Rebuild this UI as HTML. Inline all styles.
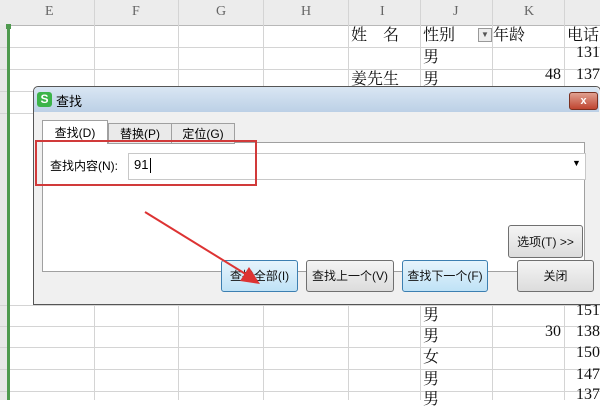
<!DOCTYPE html><html><head><meta charset="utf-8"><style>
body{margin:0;width:600px;height:400px;overflow:hidden;background:#fff;font-family:"Liberation Sans","Noto Sans CJK SC",sans-serif;position:relative}
.a{position:absolute}
.hdr{top:0;left:0;width:600px;height:25px;background:#ececec;border-bottom:1px solid #b8b8b8}
.vl{position:absolute;top:0;width:1px;height:400px;background:#d4d4d4}
.hl{position:absolute;left:0;width:600px;height:1px;background:#d4d4d4}
.ch{position:absolute;top:4px;font-family:"Liberation Serif",serif;font-size:14px;color:#666}
.c{position:absolute;font-family:"Liberation Serif","Noto Serif CJK SC",serif;font-size:16px;color:#111;margin-top:-3px}
.btn{position:absolute;box-sizing:border-box;border:1px solid #707070;border-radius:3px;background:linear-gradient(#f4f4f4,#dcdcdc);font-size:12px;text-align:center;line-height:30px;color:#111}
.blue{background:linear-gradient(#e6f4fc,#bfe2f6);border-color:#3c7fb1}
</style></head><body>
<div class="a hdr"></div>
<div class="a" style="left:0;top:25px;width:8px;height:375px;background:#e8e8e8"></div>
<div class="vl" style="left:94px"></div><div class="vl" style="left:178px"></div><div class="vl" style="left:263px"></div><div class="vl" style="left:348px"></div><div class="vl" style="left:420px"></div><div class="vl" style="left:492px"></div><div class="vl" style="left:564px"></div>
<div class="hl" style="top:47px"></div><div class="hl" style="top:69px"></div><div class="hl" style="top:91px"></div><div class="hl" style="top:113px"></div><div class="hl" style="top:305px"></div><div class="hl" style="top:326px"></div><div class="hl" style="top:347px"></div><div class="hl" style="top:369px"></div><div class="hl" style="top:391px"></div>
<div class="a" style="left:7px;top:25px;width:3px;height:375px;background:#4f9a4f"></div>
<div class="a" style="left:6px;top:24px;width:5px;height:5px;background:#4f9a4f"></div>
<span class="ch" style="left:45px">E</span><span class="ch" style="left:132px">F</span><span class="ch" style="left:216px">G</span><span class="ch" style="left:301px">H</span><span class="ch" style="left:380px">I</span><span class="ch" style="left:453px">J</span><span class="ch" style="left:524px">K</span>
<span class="c" style="left:351px;top:25px">姓　名</span><span class="c" style="left:423px;top:25px">性别</span>
<div class="a" style="left:478px;top:28px;width:12px;height:12px;border:1px solid #999;background:#eee;font-size:8px;text-align:center;line-height:12px;color:#555">▼</div>
<span class="c" style="left:493px;top:25px">年龄</span><span class="c" style="left:567px;top:25px">电话</span>
<span class="c" style="left:423px;top:47px">男</span><span class="c" style="left:576px;top:47px">131</span>
<span class="c" style="left:351px;top:69px">姜先生</span><span class="c" style="left:423px;top:69px">男</span><span class="c" style="left:545px;top:69px">48</span><span class="c" style="left:576px;top:69px">137</span>
<span class="c" style="left:423px;top:305px">男</span><span class="c" style="left:576px;top:305px">151</span>
<span class="c" style="left:423px;top:326px">男</span><span class="c" style="left:545px;top:326px">30</span><span class="c" style="left:576px;top:326px">138</span>
<span class="c" style="left:423px;top:347px">女</span><span class="c" style="left:576px;top:347px">150</span>
<span class="c" style="left:423px;top:369px">男</span><span class="c" style="left:576px;top:369px">147</span>
<span class="c" style="left:423px;top:389px">男</span><span class="c" style="left:576px;top:389px">137</span>
<div class="a" style="left:33px;top:86px;width:566px;height:217px;background:#f0f0f0;border:1px solid #555;border-radius:5px 5px 0 0"></div>
<div class="a" style="left:34px;top:87px;width:565px;height:25px;background:linear-gradient(#d9e6f3,#bcd0e6);border-radius:5px 5px 0 0"></div>
<div class="a" style="left:37px;top:92px;width:15px;height:15px;background:#3cb44a;border-radius:3px;color:#fff;font-size:12px;font-weight:bold;text-align:center;line-height:15px">S</div>
<span class="a" style="left:56px;top:91px;font-size:13px">查找</span>
<div class="a" style="left:569px;top:92px;width:27px;height:16px;background:linear-gradient(#e0a090,#c04530);border:1px solid #7a3020;border-radius:3px;color:#fff;font-size:11px;font-weight:bold;text-align:center;line-height:16px">x</div>
<div class="a" style="left:42px;top:142px;width:541px;height:128px;background:#fff;border:1px solid #a0a0a0"></div>
<div class="a" style="left:42px;top:120px;width:64px;height:23px;background:#fff;border:1px solid #a0a0a0;border-bottom:none;font-size:12px;text-align:center;line-height:24px">查找(D)</div>
<div class="a" style="left:108px;top:123px;width:62px;height:19px;background:#eaeaea;border:1px solid #a0a0a0;font-size:12px;text-align:center;line-height:20px">替换(P)</div>
<div class="a" style="left:171px;top:123px;width:62px;height:19px;background:#eaeaea;border:1px solid #a0a0a0;font-size:12px;text-align:center;line-height:20px">定位(G)</div>
<span class="a" style="left:50px;top:157px;font-size:12px">查找内容(N):</span>
<div class="a" style="left:128px;top:153px;width:456px;height:25px;border:1px solid #c8c8c8;background:#fff"></div>
<span class="a" style="left:134px;top:157px;font-size:13px">91</span>
<div class="a" style="left:150px;top:158px;width:1px;height:15px;background:#000"></div>
<span class="a" style="left:572px;top:158px;font-size:9px">▼</span>
<div class="a" style="left:35px;top:140px;width:218px;height:42px;border:2px solid #d13a3a"></div>
<div class="btn" style="left:508px;top:225px;width:75px;height:33px;line-height:32px">选项(T) &gt;&gt;</div>
<div class="btn blue" style="left:221px;top:260px;width:77px;height:32px">查找全部(I)</div>
<div class="btn" style="left:306px;top:260px;width:88px;height:32px">查找上一个(V)</div>
<div class="btn blue" style="left:402px;top:260px;width:86px;height:32px">查找下一个(F)</div>
<div class="btn" style="left:517px;top:260px;width:77px;height:32px">关闭</div>
<svg class="a" style="left:0;top:0" width="600" height="400"><line x1="145" y1="212" x2="252" y2="278" stroke="#d33" stroke-width="2"/><polygon points="260,284 240,281 249,267" fill="#d33"/></svg>
</body></html>
